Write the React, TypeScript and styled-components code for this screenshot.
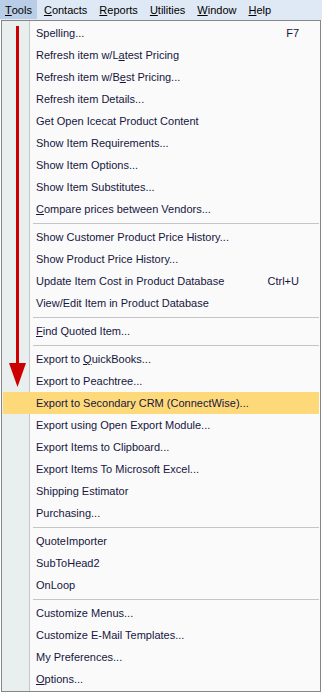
import * as React from "react";
import styled, { createGlobalStyle } from "styled-components";

type Entry =
  | { kind: "item"; label: string; hotkey?: number; shortcut?: string; active?: boolean }
  | { kind: "sep" };

const item = (label: string, hotkey?: number, shortcut?: string, active?: boolean): Entry => ({
  kind: "item",
  label,
  hotkey,
  shortcut,
  active,
});
const sep: Entry = { kind: "sep" };

const topMenus: { label: string; hotkey: number; open?: boolean }[] = [
  { label: "Tools", hotkey: 0, open: true },
  { label: "Contacts", hotkey: 0 },
  { label: "Reports", hotkey: 0 },
  { label: "Utilities", hotkey: 0 },
  { label: "Window", hotkey: 0 },
  { label: "Help", hotkey: 0 },
];

const entries: Entry[] = [
  item("Spelling...", undefined, "F7"),
  item("Refresh item w/Latest Pricing", 16),
  item("Refresh item w/Best Pricing...", 16),
  item("Refresh item Details..."),
  item("Get Open Icecat Product Content"),
  item("Show Item Requirements..."),
  item("Show Item Options..."),
  item("Show Item Substitutes..."),
  item("Compare prices between Vendors...", 0),
  sep,
  item("Show Customer Product Price History..."),
  item("Show Product Price History..."),
  item("Update Item Cost in Product Database", undefined, "Ctrl+U"),
  item("View/Edit Item in Product Database"),
  sep,
  item("Find Quoted Item...", 0),
  sep,
  item("Export to QuickBooks...", 10),
  item("Export to Peachtree..."),
  item("Export to Secondary CRM (ConnectWise)...", undefined, undefined, true),
  item("Export using Open Export Module..."),
  item("Export Items to Clipboard..."),
  item("Export Items To Microsoft Excel..."),
  item("Shipping Estimator"),
  item("Purchasing..."),
  sep,
  item("QuoteImporter"),
  item("SubToHead2"),
  item("OnLoop"),
  sep,
  item("Customize Menus..."),
  item("Customize E-Mail Templates..."),
  item("My Preferences..."),
  item("Options...", 0),
];

function Mnemonic({ text, index }: { text: string; index?: number }) {
  if (index === undefined) return <>{text}</>;
  return (
    <>
      {text.slice(0, index)}
      <u>{text[index]}</u>
      {text.slice(index + 1)}
    </>
  );
}

export default function App() {
  return (
    <>
      <GlobalStyle />
      <Screen>
        <MenuBar>
          {topMenus.map((m) => (
            <TopItem key={m.label} $open={m.open}>
              <Mnemonic text={m.label} index={m.hotkey} />
            </TopItem>
          ))}
        </MenuBar>
        <Dropdown>
          <Gutter />
          <List>
            {entries.map((e, i) =>
              e.kind === "sep" ? (
                <Separator key={i} />
              ) : (
                <Row key={i} $active={e.active}>
                  <Label>
                    <Mnemonic text={e.label} index={e.hotkey} />
                  </Label>
                  {e.shortcut && <Shortcut>{e.shortcut}</Shortcut>}
                </Row>
              )
            )}
          </List>
          <Arrow width="17" height="362" viewBox="0 0 17 362">
            <rect x="7" y="0" width="3" height="340" fill="#cc0000" />
            <polygon points="0,337 17,337 8.5,361" fill="#cc0000" />
          </Arrow>
        </Dropdown>
      </Screen>
    </>
  );
}

const GlobalStyle = createGlobalStyle`
  html, body {
    margin: 0;
    padding: 0;
    background: #ffffff;
  }
  body {
    font-family: "Liberation Sans", Arial, sans-serif;
    font-size: 11px;
  }
`;

const Screen = styled.div`
  width: 322px;
  height: 693px;
  display: flex;
  flex-direction: column;
  background: #ffffff;
`;

const MenuBar = styled.div`
  display: flex;
  gap: 2px;
  height: 20px;
  background: #dfe9f5;
  font-size: 11px;
  color: #000000;
`;

const TopItem = styled.div<{ $open?: boolean }>`
  display: flex;
  align-items: center;
  height: 19px;
  padding: 0 5px;
  background: ${(p) => (p.$open ? "#b9cde6" : "transparent")};
`;

const Dropdown = styled.div`
  position: relative;
  margin: 0 1px;
  width: 320px;
  height: 672px;
  box-sizing: border-box;
  border: 1px solid #868686;
  background: #fafafa;
  display: flex;
  padding: 1px;
`;

const Gutter = styled.div`
  position: absolute;
  left: 0;
  top: 0;
  bottom: 0;
  width: 27px;
  background: #e9eeee;
  border-right: 1px solid #c5c5c5;
`;

const List = styled.div`
  position: relative;
  flex: 1;
  display: flex;
  flex-direction: column;
`;

const Row = styled.div<{ $active?: boolean }>`
  display: flex;
  align-items: center;
  height: 22px;
  padding: 0 20px 0 33px;
  color: #16163e;
  font-size: 11px;
  background: ${(p) => (p.$active ? "#fed979" : "transparent")};
`;

const Label = styled.span`
  flex: 1;
  white-space: nowrap;
`;

const Shortcut = styled.span`
  white-space: nowrap;
`;

const Separator = styled.div`
  height: 6px;
  display: flex;
  align-items: center;
  padding-left: 30px;
  &::after {
    content: "";
    flex: 1;
    height: 1px;
    background: #c5c5c5;
  }
`;

const Arrow = styled.svg`
  position: absolute;
  left: 7px;
  top: 5px;
`;
